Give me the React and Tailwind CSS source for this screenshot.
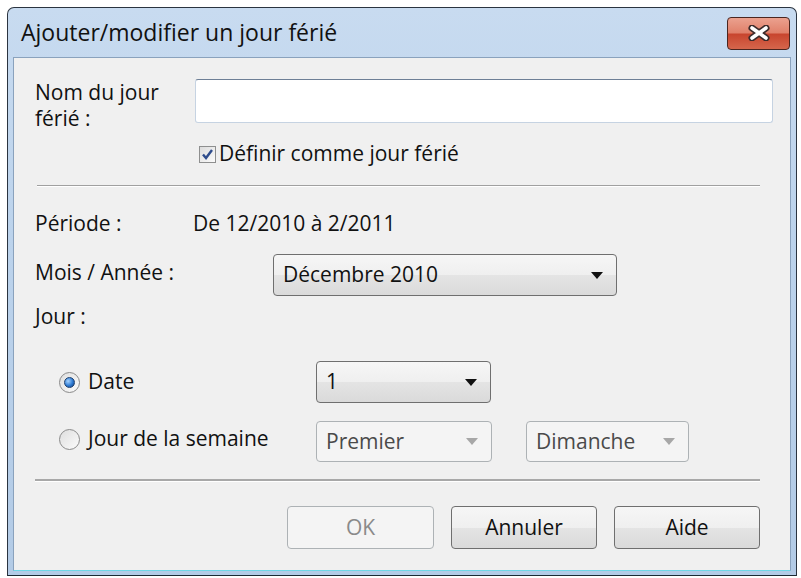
import React from "react";

const font = { fontFamily: '"Open Sans", "Noto Sans", sans-serif' };

const Combo = ({ value, width, disabled }) => (
  <div
    className={`flex items-center justify-between rounded-[4px] border pl-[9px] pr-[13px] ${width} ${
      disabled
        ? "h-[41px] border-[#adb2b5] bg-[#f4f4f4] text-[#4a4a4a]"
        : "h-[42px] border-[#6f6f6f] bg-[linear-gradient(to_bottom,#f6f6f6_0%,#efefef_50%,#e4e4e4_51%,#dadada_100%)] text-[#111]"
    }`}
  >
    <span>{value}</span>
    <svg width="12" height="7" viewBox="0 0 12 7">
      <path d="M0 0 H12 L6 7 Z" fill={disabled ? "#a7a7a7" : "#111"} />
    </svg>
  </div>
);

const Radio = ({ checked }) => (
  <div className="flex h-[21px] w-[21px] items-center justify-center rounded-full border border-[#8a8a8a] bg-[linear-gradient(135deg,#dedede,#fbfbfb)]">
    {checked && (
      <div className="h-[11px] w-[11px] rounded-full border border-[#1c3f6e] bg-[radial-gradient(circle_at_35%_35%,#a6d3ff_0%,#2d7ad3_55%,#163e7a_100%)]" />
    )}
  </div>
);

const Button = ({ label, disabled, width }) => (
  <div
    className={`flex h-[43px] items-center justify-center rounded-[4px] border ${width} ${
      disabled
        ? "border-[#adb2b5] bg-[#f4f4f4] text-[#8a8a8a]"
        : "border-[#6f6f6f] bg-[linear-gradient(to_bottom,#f6f6f6_0%,#efefef_50%,#e4e4e4_51%,#dadada_100%)] text-[#111]"
    }`}
  >
    {label}
  </div>
);

const App = () => {
  return (
    <div className="h-[578px] w-[801px] bg-white pl-[7px] pt-[7px]" style={font}>
      <div className="flex h-[569px] w-[790px] flex-col rounded-t-[7px] border border-[#2b3440] border-b-[#1b2a33] bg-[linear-gradient(to_bottom,#c8dbf0_0%,#bcd3ec_40%,#b3cbe6_100%)] px-[5px] pb-[4px]">
        {/* title bar */}
        <div className="flex h-[49px] shrink-0 items-center justify-between pl-[8px] pr-[1px]">
          <span className="text-[23px] font-medium text-[#111]">Ajouter/modifier un jour férié</span>
          <div className="mt-[1px] flex h-[33px] w-[63px] items-center justify-center rounded-[4px] border border-[#4a2620] bg-[linear-gradient(to_bottom,#eba18f_0%,#e0806a_48%,#c8452e_52%,#d5664c_100%)]">
            <svg width="24" height="16" viewBox="0 0 24 16">
              <path d="M5 3 L19 13 M19 3 L5 13" stroke="#3b2b2b" strokeWidth="7" strokeLinecap="round" />
              <path d="M5 3 L19 13 M19 3 L5 13" stroke="#ffffff" strokeWidth="3.6" strokeLinecap="round" />
            </svg>
          </div>
        </div>

        {/* client area */}
        <div className="flex-1 border border-[#8aa2bd] border-b-[#6fd6e6] bg-[#f0f0f0] pl-[21px] text-[21px] font-medium text-[#111]">
          <div className="mt-[21px] flex items-start">
            <div className="w-[160px] leading-[26px]">
              Nom du jour
              <br />
              férié :
            </div>
            <div className="h-[44px] w-[578px] rounded-[3px] border border-[#c6d3e2] border-t-[#6d7f96] bg-white" />
          </div>

          <div className="mt-[10px] flex h-[26px] items-center pl-[164px]">
            <div className="flex h-[17px] w-[17px] items-center justify-center border border-[#8e8f8f] bg-[linear-gradient(135deg,#dcdcdc,#fbfbfb)]">
              <svg width="13" height="13" viewBox="0 0 13 13">
                <path d="M2 6.5 L5 10 L11 2" stroke="#2e4c8c" strokeWidth="2.4" fill="none" />
              </svg>
            </div>
            <span className="ml-[3px]">Définir comme jour férié</span>
          </div>

          <div className="ml-[2px] mt-[18px] h-[2px] w-[723px] border-t border-[#a0a0a0] bg-white" />

          <div className="mt-[24px] flex h-[26px] items-center">
            <span className="w-[158px]">Période :</span>
            <span>De 12/2010 à 2/2011</span>
          </div>

          <div className="mt-[17px] flex items-center">
            <span className="mb-[5px] w-[238px]">Mois / Année :</span>
            <Combo value="Décembre 2010" width="w-[344px]" />
          </div>

          <div className="mt-[8px] flex h-[26px] items-center">Jour :</div>

          <div className="mt-[31px] flex items-center">
            <div className="flex w-[281px] items-center pl-[24px]">
              <Radio checked />
              <span className="ml-[8px]">Date</span>
            </div>
            <Combo value="1" width="w-[175px]" />
          </div>

          <div className="mt-[18px] flex items-center">
            <div className="mb-[5px] flex w-[281px] items-center pl-[24px]">
              <Radio />
              <span className="ml-[8px]">Jour de la semaine</span>
            </div>
            <Combo value="Premier" width="w-[176px]" disabled />
            <div className="w-[34px]" />
            <Combo value="Dimanche" width="w-[163px]" disabled />
          </div>

          <div className="mt-[17px] h-[3px] w-[725px] border-t-2 border-[#a8a8a8] bg-white" />

          <div className="mt-[24px] flex w-[725px] justify-end gap-[17px]">
            <Button label="OK" disabled width="w-[147px]" />
            <Button label="Annuler" width="w-[146px]" />
            <Button label="Aide" width="w-[146px]" />
          </div>
        </div>
      </div>
    </div>
  );
};

export default App;
